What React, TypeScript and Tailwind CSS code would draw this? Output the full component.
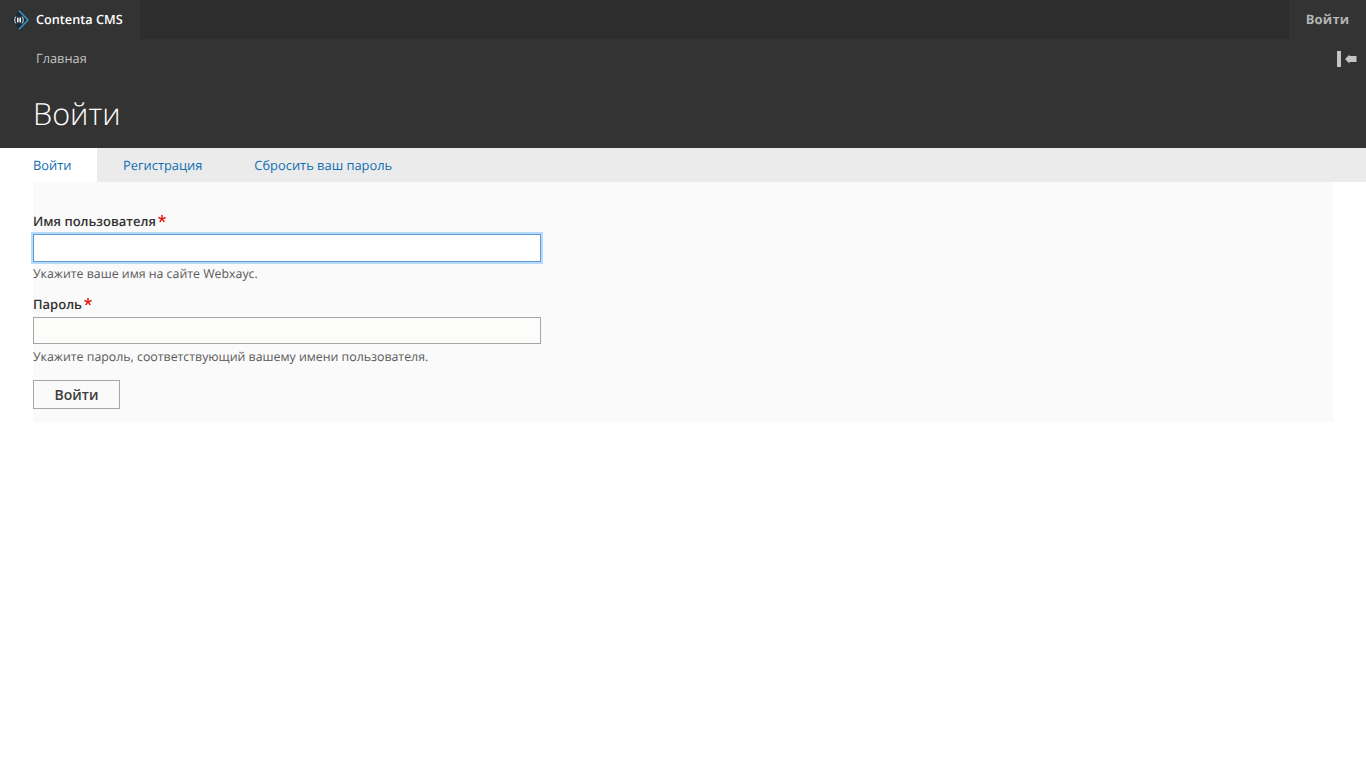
import React from 'react';

const Required = () => (
  <svg width="8" height="8" viewBox="0 0 16 16" className="ml-[2px] mb-[7px] shrink-0">
    <path d="M6.4 0 H9.6 L9.2 5.8 L14.6 3.6 L15.6 6.8 L10 8.2 L13.8 12.8 L11 14.6 L8 9.6 L5 14.6 L2.2 12.8 L6 8.2 L0.4 6.8 L1.4 3.6 L6.8 5.8 Z" fill="#e00c00" />
  </svg>
);

const Logo = () => (
  <svg width="18" height="20" viewBox="0 0 18 20" className="shrink-0">
    <path d="M1 10 L8 1 L15.5 10 L8 19 Z" fill="#1b2a35" />
    <path d="M8 0.7 L17 10 L8 19.3" fill="none" stroke="#2f9bd0" strokeWidth="1.5" />
    <path d="M5.2 6.8 Q4 6.8 4 8.4 V9.6 L3.4 10 L4 10.4 V11.6 Q4 13.2 5.2 13.2 M10.8 6.8 Q12 6.8 12 8.4 V9.6 L12.6 10 L12 10.4 V11.6 Q12 13.2 10.8 13.2" fill="none" stroke="#f4f4f4" strokeWidth="1" />
    <rect x="6" y="7.6" width="1.6" height="4.8" fill="#f4f4f4" />
    <rect x="8.4" y="7.6" width="1.6" height="4.8" fill="#f4f4f4" />
  </svg>
);

const CollapseIcon = () => (
  <svg width="20" height="16" viewBox="0 0 20 16">
    <rect x="0" y="0" width="4" height="16" fill="#c4c4c4" />
    <path d="M8 8 L12.5 3.5 V5 H19.5 V11 H12.5 V12.5 Z" fill="#c4c4c4" />
  </svg>
);

const Field = ({ label, hint, focused }: { label: string; hint: string; focused?: boolean }) => (
  <div className="mb-[11px]">
    <label className="flex items-center h-[20px] mb-[3px] pt-[2px] text-[13px] font-semibold text-[#333]">
      {label}
      <Required />
    </label>
    {focused ? (
      <input
        type="text"
        className="block w-[508px] h-[28px] mb-[3px] bg-white border border-[#5b9dd9] shadow-[0_0_0_2px_#b8dafa] outline-none"
      />
    ) : (
      <input
        type="password"
        className="block w-[508px] h-[27px] mb-[4px] bg-[#fcfcfa] border border-[#a6a6a6] outline-none"
      />
    )}
    <p className="text-[12.35px] leading-[18px] text-[#595959]">{hint}</p>
  </div>
);

export default function App() {
  return (
    <div className="min-h-[768px] bg-white font-['Open_Sans',sans-serif] [text-rendering:geometricPrecision]">
      <div className="flex justify-between h-[39px] bg-[#2d2d2d]">
        <a className="flex items-center w-[140px] pl-[11px] gap-[7px] bg-[#333] text-[12.7px] font-semibold text-white">
          <Logo />
          Contenta CMS
        </a>
        <a className="flex items-center justify-center w-[77px] bg-[#333] text-[13px] font-bold tracking-[0.2px] text-[#b5b5b5]">
          Войти
        </a>
      </div>

      <header className="h-[109px] bg-[#333]">
        <div className="flex items-center justify-between h-[39px] pl-[36px] pr-[9px]">
          <span className="text-[12.8px] text-[#c4c4c4]">Главная</span>
          <CollapseIcon />
        </div>
        <h1 className="pl-[33px] mt-[13px] text-[30.6px] leading-[44px] font-light text-white">Войти</h1>
      </header>

      <nav className="flex h-[34px] bg-[#ebebeb] text-[12.88px] text-[#0f6eb1]">
        <a className="flex items-center w-[97px] pl-[33px] pt-[2px] bg-white">Войти</a>
        <a className="flex items-center pl-[26px] pr-[26px] pt-[2px]">Регистрация</a>
        <a className="flex items-center pl-[26px] pr-[26px] pt-[2px]">Сбросить ваш пароль</a>
      </nav>

      <main className="mx-[33px] h-[240px] pt-[29px] bg-[#fafafa]">
        <Field label="Имя пользователя" hint="Укажите ваше имя на сайте Webxаус." focused />
        <Field label="Пароль" hint="Укажите пароль, соответствующий вашему имени пользователя." />
        <button className="block w-[87px] h-[29px] mt-[14px] bg-[#fafafa] border border-[#a6a6a6] text-[14px] font-semibold text-[#3d3d3d]">
          Войти
        </button>
      </main>
    </div>
  );
}
